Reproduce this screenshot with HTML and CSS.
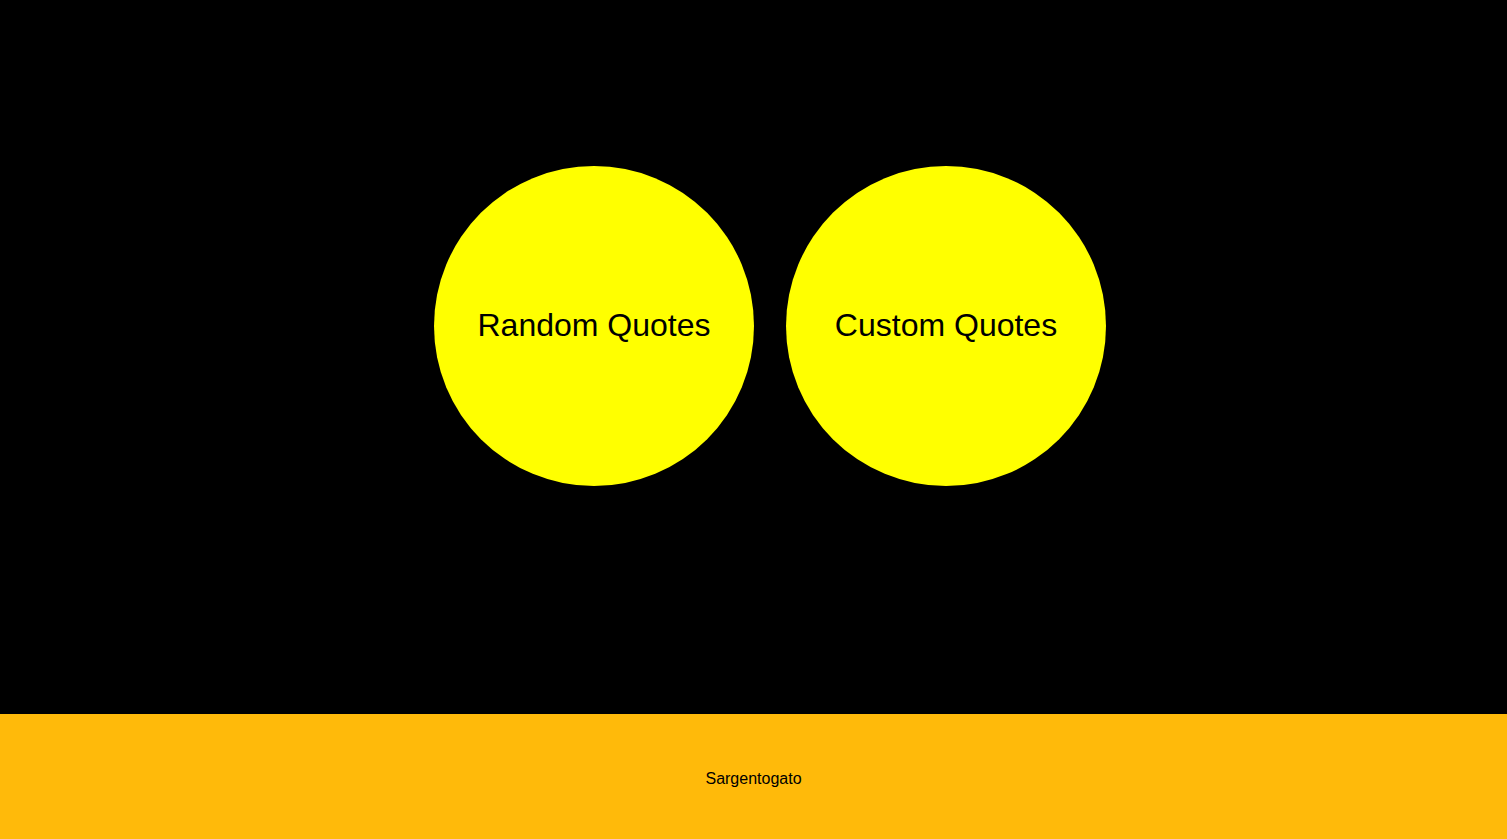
FILE: index.html
```html
<!DOCTYPE html>
<html>
<head>
<meta charset="utf-8">
<link rel="stylesheet" href="styles.css">
</head>
<body>
<main class="stage">
  <div class="bubbles">
    <a class="bubble">Random Quotes</a>
    <a class="bubble">Custom Quotes</a>
  </div>
</main>
<footer class="footer">Sargentogato</footer>
</body>
</html>
```
FILE: styles.css
```css
html, body {
  margin: 0;
  padding: 0;
  height: 100%;
}
body {
  background: #000;
  font-family: "Liberation Sans", Arial, sans-serif;
  display: flex;
  flex-direction: column;
  overflow: hidden;
}
.stage {
  height: 714px;
  box-sizing: border-box;
  padding-top: 166px;
}
.bubbles {
  display: flex;
  justify-content: center;
  gap: 32px;
  padding-left: 33px;
}
.bubble {
  width: 320px;
  height: 320px;
  box-sizing: border-box;
  padding-bottom: 2px;
  border-radius: 50%;
  background: #ffff00;
  color: #000;
  font-size: 32px;
  display: flex;
  align-items: center;
  justify-content: center;
  text-decoration: none;
}
.footer {
  height: 125px;
  box-sizing: border-box;
  padding-top: 4px;
  background: #ffba0a;
  color: #000;
  font-size: 16px;
  display: flex;
  align-items: center;
  justify-content: center;
}
```
